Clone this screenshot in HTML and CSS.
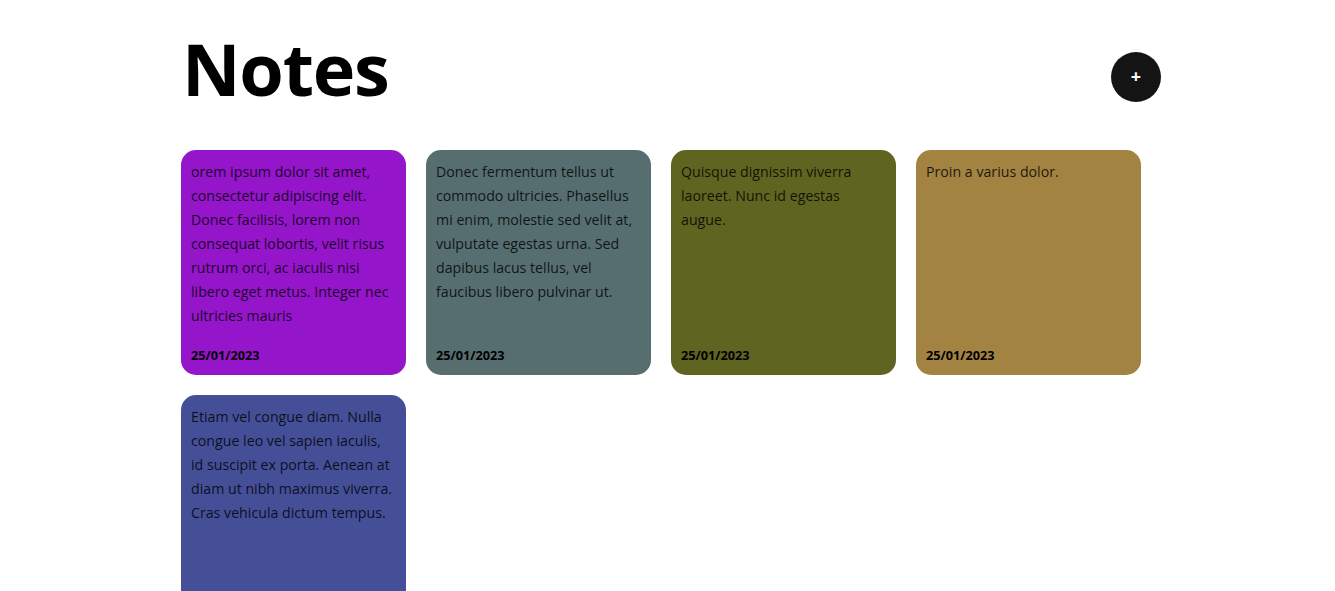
FILE: index.html
```html
<!DOCTYPE html>
<html lang="en">
<head>
<meta charset="utf-8">
<title>Notes</title>
<link rel="stylesheet" href="styles.css">
</head>
<body>
<div class="page">
  <header class="header">
    <h1 class="title">Notes</h1>
    <button class="add-btn" type="button">+</button>
  </header>
  <main class="notes">
    <div class="note note-purple">
      <p class="note-text">orem ipsum dolor sit amet, consectetur adipiscing elit. Donec facilisis, lorem non consequat lobortis, velit risus rutrum orci, ac iaculis nisi libero eget metus. Integer nec ultricies mauris</p>
      <span class="note-date">25/01/2023</span>
    </div>
    <div class="note note-slate">
      <p class="note-text">Donec fermentum tellus ut commodo ultricies. Phasellus mi enim, molestie sed velit at, vulputate egestas urna. Sed dapibus lacus tellus, vel faucibus libero pulvinar ut.</p>
      <span class="note-date">25/01/2023</span>
    </div>
    <div class="note note-olive">
      <p class="note-text">Quisque dignissim viverra laoreet. Nunc id egestas augue.</p>
      <span class="note-date">25/01/2023</span>
    </div>
    <div class="note note-gold">
      <p class="note-text">Proin a varius dolor.</p>
      <span class="note-date">25/01/2023</span>
    </div>
    <div class="note note-blue">
      <p class="note-text">Etiam vel congue diam. Nulla congue leo vel sapien iaculis, id suscipit ex porta. Aenean at diam ut nibh maximus viverra. Cras vehicula dictum tempus.</p>
      <span class="note-date">25/01/2023</span>
    </div>
  </main>
</div>
</body>
</html>
```

FILE: styles.css
```css
* { box-sizing: border-box; }

html, body {
  margin: 0;
  padding: 0;
  background: #ffffff;
  font-family: "Open Sans", "Noto Sans", "Liberation Sans", sans-serif;
  color: #000;
}

.page {
  width: 987px;
  margin: 0 auto;
  padding-left: 7px;
}

.header {
  display: flex;
  align-items: center;
  justify-content: space-between;
  height: 150px;
  padding-top: 4px;
}

.title {
  margin: 0 0 18px 1px;
  font-size: 72px;
  font-weight: 700;
  line-height: 1;
  letter-spacing: -1.2px;
}

.add-btn {
  width: 50px;
  height: 50px;
  border-radius: 50%;
  border: none;
  background: #141414;
  color: #fff;
  font-family: "Open Sans", sans-serif;
  font-size: 18px;
  font-weight: 700;
  line-height: 1;
  padding: 0 0 2px;
  display: flex;
  align-items: center;
  justify-content: center;
}

.notes {
  display: grid;
  grid-template-columns: repeat(4, 225px);
  grid-auto-rows: 225px;
  gap: 20px;
}

.note {
  border-radius: 15px;
  padding: 10px;
  display: flex;
  flex-direction: column;
}

.note-text {
  margin: 0;
  font-size: 14.2px;
  line-height: 24px;
  color: rgba(0, 0, 0, 0.82);
}

.note-date {
  margin-top: auto;
  font-size: 12.7px;
  font-weight: 700;
  line-height: 20px;
}

.note-purple { background: #9515ca; }
.note-slate  { background: #566e70; }
.note-olive  { background: #5f6420; }
.note-gold   { background: #a28342; }
.note-blue   { background: #444f98; }
```
